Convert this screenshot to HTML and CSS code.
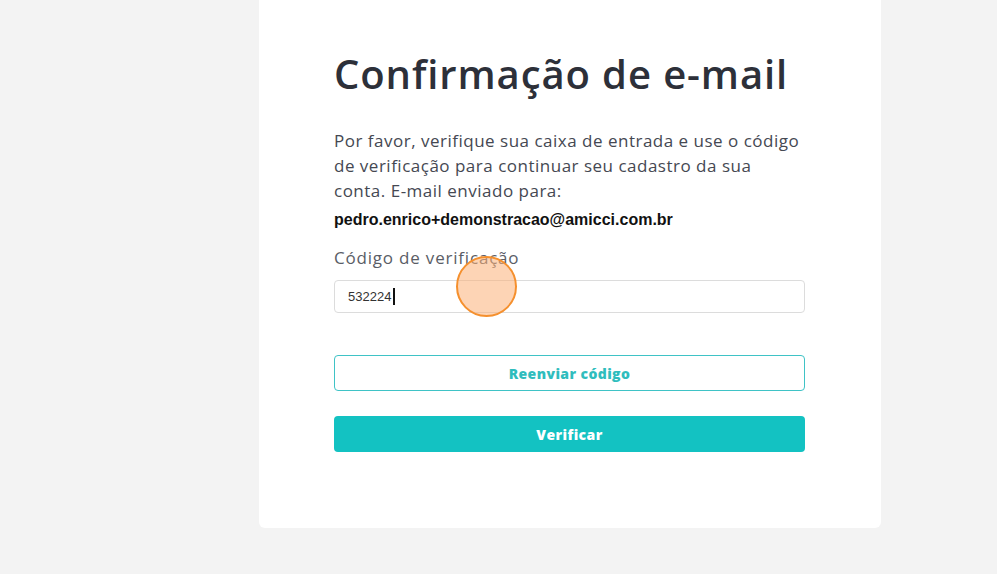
FILE: index.html
```html
<!DOCTYPE html>
<html lang="pt-BR">
<head>
    <meta charset="UTF-8">
    <meta name="viewport" content="width=device-width, initial-scale=1.0">
    <title>Confirmação de e-mail</title>
    <link rel="stylesheet" href="styles.css">
</head>
<body>
    <main class="page">
        <section class="card">
            <h1>Confirmação de e-mail</h1>
            <p class="intro">Por favor, verifique sua caixa de entrada e use o código de verificação para continuar seu cadastro da sua conta. E-mail enviado para:</p>
            <p class="email">pedro.enrico+demonstracao@amicci.com.br</p>

            <form class="verify-form">
                <label for="code">Código de verificação</label>
                <div class="input-wrap">
                    <input type="text" id="code" name="code" value="532224">
                    <span class="caret"></span>
                    <span class="click-dot"></span>
                </div>

                <button type="button" class="btn btn-outline">Reenviar código</button>
                <button type="submit" class="btn btn-primary">Verificar</button>
            </form>
        </section>
    </main>
</body>
</html>
```

FILE: styles.css
```css
body {
    margin: 0;
    padding: 0;
    background-color: #f3f3f3; /* light grey page */
    font-family: "Open Sans", "Noto Sans", sans-serif;
    color: #2d3039;
}

.page {
    display: flex;
    justify-content: flex-start;
    padding-left: 259px;
    height: 574px;
}

.card {
    width: 471px;
    background-color: #fff;
    border-radius: 0 0 6px 6px;
    padding: 50px 76px 76px 75px;
    align-self: flex-start;
}

h1 {
    margin: 0 0 30px;
    font-size: 40px;
    font-weight: 600;
    line-height: 48px;
    color: #2d3039;
    letter-spacing: 0.9px;
}

.intro {
    margin: 0;
    font-size: 17px;
    line-height: 25px;
    letter-spacing: 0.5px;
    color: #454852;
}

.email {
    margin: 7px 0 0;
    font-family: "Liberation Sans", Arial, sans-serif;
    font-weight: bold;
    font-size: 16px;
    line-height: 20px;
    color: #111;
}

.verify-form {
    margin-top: 16px;
}

.verify-form label {
    display: block;
    font-size: 17px;
    line-height: 24px;
    letter-spacing: 0.8px;
    color: #5a5d66;
    margin-bottom: 10px;
}

.input-wrap {
    position: relative;
}

.input-wrap input {
    box-sizing: border-box;
    width: 100%;
    height: 33px;
    padding: 0 13px;
    border: 1px solid #dcdcdc;
    border-radius: 4px;
    font-family: "Liberation Sans", Arial, sans-serif;
    font-size: 13px;
    color: #333;
    outline: none;
}

.caret {
    position: absolute;
    left: 59px;
    top: 8px;
    width: 2px;
    height: 17px;
    background-color: #111;
}

/* click indicator from the screen recording */
.click-dot {
    position: absolute;
    left: 122px;
    top: -24px;
    width: 61px;
    height: 61px;
    box-sizing: border-box;
    border-radius: 50%;
    border: 2px solid #f5902e;
    background-color: rgba(252, 176, 120, 0.55);
}

.btn {
    display: block;
    box-sizing: border-box;
    width: 100%;
    height: 36px;
    border-radius: 4px;
    font-family: "Open Sans", "Noto Sans", sans-serif;
    font-size: 14px;
    font-weight: 800;
    letter-spacing: 0.4px;
    cursor: pointer;
}

.btn-outline {
    margin-top: 42px;
    background-color: #fff;
    border: 1px solid #3fc3c6;
    color: #2fbdbd;
}

.btn-primary {
    margin-top: 25px;
    background-color: #13c2c2;
    border: none;
    color: #fff;
}
```
